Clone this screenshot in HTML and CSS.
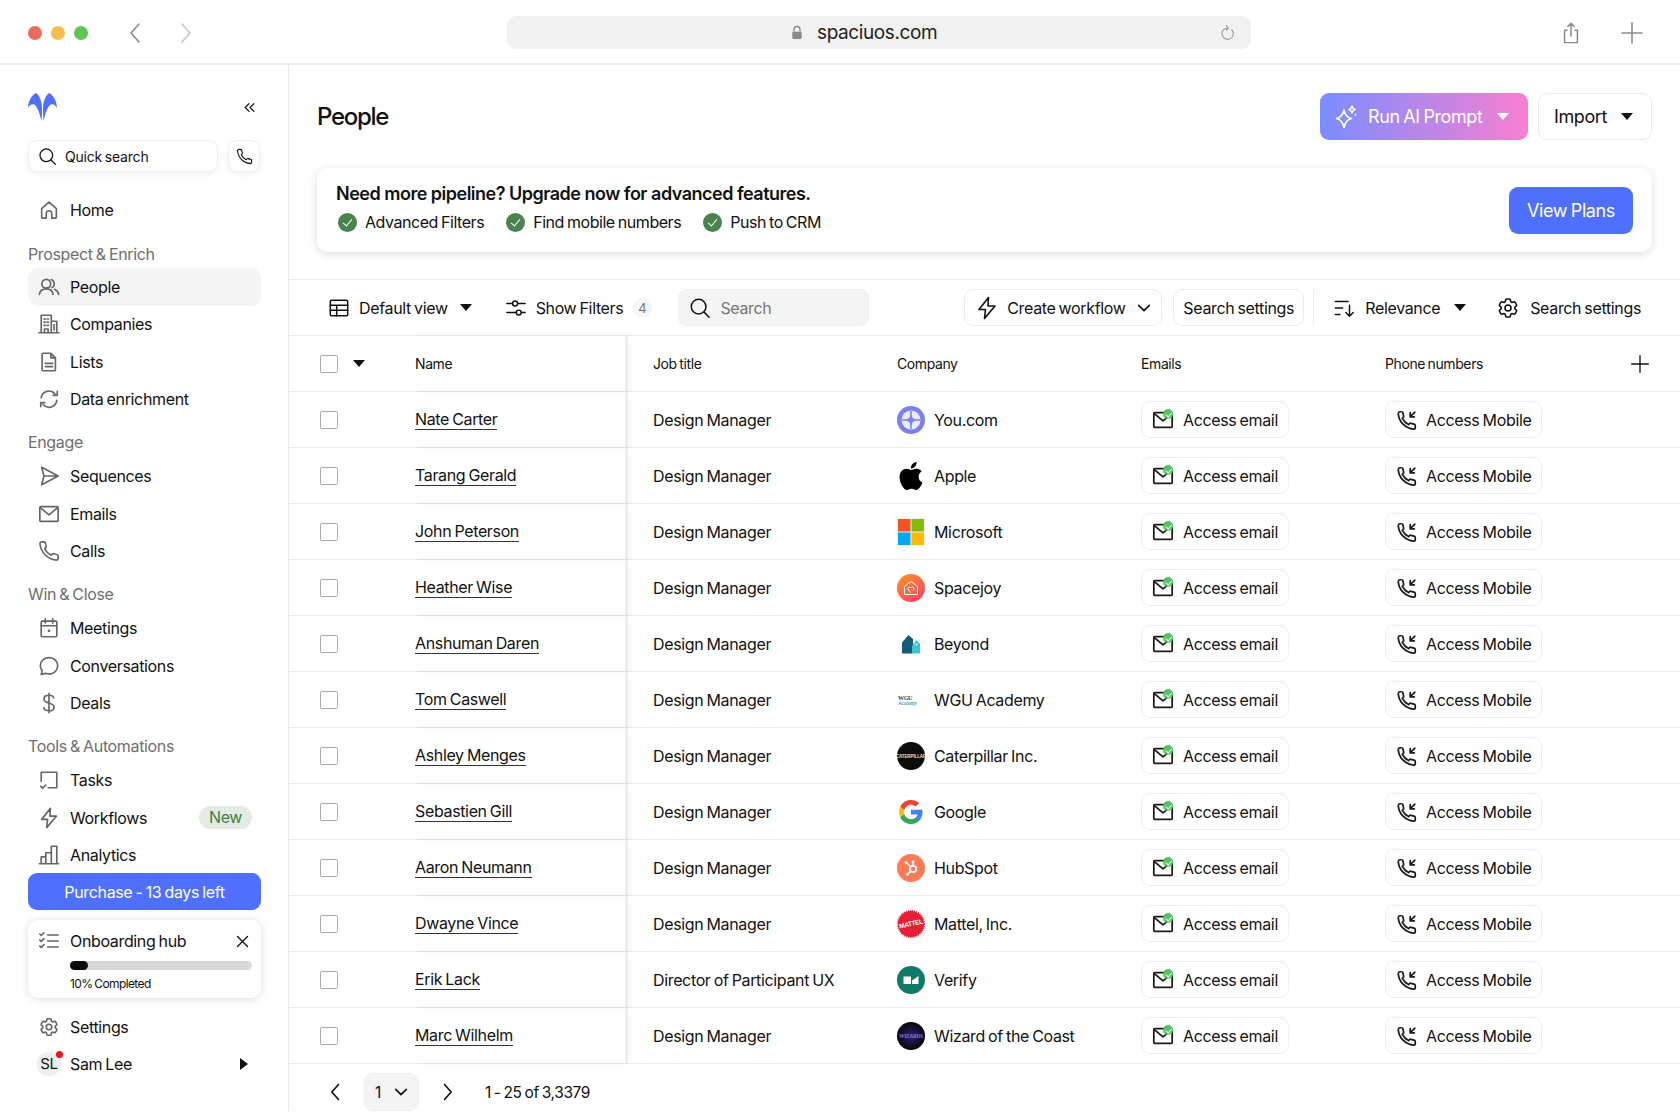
FILE: index.html
```html
<!DOCTYPE html>
<html lang="en">

<head>
    <meta charset="UTF-8">
    <meta name="viewport" content="width=device-width, initial-scale=1.0">
    <title>People</title>
    <link rel="stylesheet" href="styles.css">
</head>

<body>
    <svg class="sprite" xmlns="http://www.w3.org/2000/svg">
        <symbol id="i-home" viewBox="0 0 24 24"><path d="M4 10.5 12 3.5l8 7V20a.8.8 0 0 1-.8.8H15v-5a3 3 0 0 0-6 0v5H4.8A.8.8 0 0 1 4 20z"/></symbol>
        <symbol id="i-people" viewBox="0 0 24 24"><circle cx="9" cy="8.5" r="4.8"/><path d="M1.5 20c.6-3.6 3.6-6 7.5-6s6.9 2.4 7.5 6M14.5 3.9a4.8 4.8 0 0 1 .5 8.8M18 14.5c2.4 1 4 2.9 4.5 5.5"/></symbol>
        <symbol id="i-company" viewBox="0 0 24 24"><path d="M1 21.5h22M3.5 21.5V2.5h11v19M14.5 9h6v12.5M6.5 6.5h1.5M10 6.5h1.5M6.5 10h1.5M10 10h1.5M6.5 13.5h1.5M10 13.5h1.5M7 21.5v-4h4v4M17.5 12.5v6"/></symbol>
        <symbol id="i-file" viewBox="0 0 24 24"><path d="M5.5 2.5H14l5 5V20.5a1 1 0 0 1-1 1H5.5a1 1 0 0 1-1-1v-17a1 1 0 0 1 1-1zM14 2.5v5h5M8 13.5h8M8 17h8"/></symbol>
        <symbol id="i-sync" viewBox="0 0 24 24"><path d="M3.5 10.5a8.5 8.5 0 0 1 15-4M21 3.5V8h-4.5M20.5 13.5a8.5 8.5 0 0 1-15 4.5M3 20.5V16h4.5"/></symbol>
        <symbol id="i-send" viewBox="0 0 24 24"><path d="M4 2.5 22 12 4 21.5l2.5-9.5zM6.5 12H22"/></symbol>
        <symbol id="i-mail" viewBox="0 0 24 24"><rect x="2" y="4" width="20" height="16" rx="1"/><path d="m2.5 5 9.5 8 9.5-8"/></symbol>
        <symbol id="i-phone" viewBox="0 0 24 24"><path d="M22 17v3a2 2 0 0 1-2.2 2A19.8 19.8 0 0 1 11.2 19a19.5 19.5 0 0 1-6-6A19.8 19.8 0 0 1 2.1 4.2 2 2 0 0 1 4.1 2h2.5a1.5 1.5 0 0 1 1.5 1.3c.1.9.4 2.2.8 3.2a1.8 1.8 0 0 1-.4 1.9L7.3 9.6a16 16 0 0 0 7 7l1.2-1.2a1.8 1.8 0 0 1 1.9-.4c1 .4 2.3.7 3.2.8A1.5 1.5 0 0 1 22 17z"/></symbol>
        <symbol id="i-phone-in" viewBox="0 0 24 24"><path d="M21 20.5c0 .9-.8 1.700-1.700 1.500C10 21 3.400 14 2.500 5.500 2.400 4.600 3.100 3 4 3h2c.7 0 1.300.5 1.500 1.200.2 1 .4 2.400.8 3.300.2.500.1 1.100-.3 1.500L6.900 10.200c1.400 2.900 3.900 5.300 6.800 6.800l1.100-1.100c.4-.4 1-.5 1.500-.3.900.3 2.300.6 3.300.8.700.2 1.400.8 1.400 1.500z"/><path d="M20.5 3.500 15.500 8.500M15.500 4v4.500H20"/></symbol>
        <symbol id="i-calendar" viewBox="0 0 24 24"><rect x="3.5" y="4.5" width="17" height="17" rx="1"/><path d="M3.5 9.5h17M8 2v4.5M16 2v4.5"/><circle cx="12" cy="15" r=".6"/></symbol>
        <symbol id="i-chat" viewBox="0 0 24 24"><path d="M12 2.8c5.3 0 9.5 4 9.5 9s-4.2 9-9.5 9c-1.3 0-2.6-.3-3.8-.8l-4.7 1.2 1.1-4.1a8.8 8.8 0 0 1-2.1-5.3c0-5 4.2-9 9.5-9z"/></symbol>
        <symbol id="i-dollar" viewBox="0 0 24 24"><path d="M12 1.5v21M17 6.500C17 4.500 15 3.500 12 3.500s-5.500 1.400-5.500 4S9 11 12 12s5.500 2 5.500 4.500S15 20.500 12 20.500s-5.500-1.200-5.500-3.500"/></symbol>
        <symbol id="i-task" viewBox="0 0 24 24"><path d="M3.5 13.5v-10h17v17H11M3 19l2 2 3.5-3.5"/></symbol>
        <symbol id="i-bolt" viewBox="0 0 24 24"><path d="M13.5 1.5 4 13.5h6.5L9.5 22.5 20 10h-7z"/></symbol>
        <symbol id="i-bars" viewBox="0 0 24 24"><path d="M1.5 21.5h21M3.5 21.5V14h5v7.5M8.5 21.5V9.5h6v12M14.5 21.5V2.5h6v19"/></symbol>
        <symbol id="i-checklist" viewBox="0 0 24 24"><path d="M10.5 5.5H22M10.5 12H22M10.5 18.5H22M2 4.500l1.500 1.500L6.500 3M2 11l1.500 1.500 3-3M2 17.500 3.500 19l3-3"/></symbol>
        <symbol id="i-gear" viewBox="0 0 24 24"><path d="M9.594 3.940c.09-.542.56-.94 1.110-.94h2.593c.55 0 1.020.398 1.110.94l.213 1.281c.063.374.313.686.645.87.074.04.147.083.22.127.324.196.72.257 1.075.124l1.217-.456a1.125 1.125 0 0 1 1.370.49l1.296 2.247a1.125 1.125 0 0 1-.26 1.431l-1.003.827c-.293.24-.438.613-.431.992a6.759 6.759 0 0 1 0 .255c-.007.378.138.75.43.99l1.005.828c.424.35.534.954.26 1.430l-1.298 2.247a1.125 1.125 0 0 1-1.369.491l-1.217-.456c-.355-.133-.75-.072-1.076.124a6.570 6.570 0 0 1-.22.128c-.331.183-.581.495-.644.869l-.213 1.280c-.09.543-.56.941-1.110.941h-2.594c-.55 0-1.020-.398-1.110-.94l-.213-1.281c-.062-.374-.312-.686-.644-.87a6.520 6.520 0 0 1-.22-.127c-.325-.196-.72-.257-1.076-.124l-1.217.456a1.125 1.125 0 0 1-1.369-.49l-1.297-2.247a1.125 1.125 0 0 1 .26-1.431l1.004-.827c.292-.24.437-.613.43-.992a6.932 6.932 0 0 1 0-.255c.007-.378-.138-.75-.43-.99l-1.004-.828a1.125 1.125 0 0 1-.26-1.430l1.297-2.247a1.125 1.125 0 0 1 1.370-.491l1.216.456c.356.133.751.072 1.076-.124.072-.044.146-.087.22-.128.332-.183.582-.495.644-.869l.214-1.281z"/><circle cx="12" cy="12" r="3"/></symbol>
        <symbol id="i-search" viewBox="0 0 24 24"><circle cx="10.5" cy="10.5" r="8"/><path d="m16.5 16.5 5.5 5.5"/></symbol>
        <symbol id="i-table" viewBox="0 0 24 24"><rect x="2.5" y="3.5" width="19" height="17" rx="1.5"/><path d="M2.5 9h19M2.5 14.5h19M9.5 9v11.5"/></symbol>
        <symbol id="i-sliders" viewBox="0 0 24 24"><path d="M2 7h6M14 7h8M2 17h10M18 17h4"/><circle cx="11" cy="7" r="2.7"/><circle cx="15" cy="17" r="2.7"/></symbol>
        <symbol id="i-sort" viewBox="0 0 24 24"><path d="M2.5 5h14M2.5 12h8M2.5 19h5M18 9v12M14 17l4 4 4-4"/></symbol>
        <symbol id="i-spark" viewBox="0 0 24 24"><path d="M10 5c1 5 3 7.5 7.5 8.5C13 14.5 11 17 10 22.5 9 17 7 14.5 2.5 13.5 7 12.5 9 10 10 5z"/><path d="M18 1c.4 2 1.2 3 3 3.5-1.8.5-2.6 1.5-3 3.5-.4-2-1.2-3-3-3.5 1.8-.5 2.6-1.5 3-3.5zM21.5 9.5v.5"/></symbol>
        <symbol id="i-lock" viewBox="0 0 14 16"><path d="M3.5 7V4.5a3.5 3.5 0 0 1 7 0V7" fill="none" stroke-width="1.5"/><rect x="1.5" y="7" width="11" height="8.5" rx="1.5" fill="currentColor" stroke="none"/></symbol>
        <symbol id="i-reload" viewBox="0 0 24 24"><path d="M17.5 7a8.5 8.5 0 1 1-5.5-2.5M9.5 1l3 3.5-3 3"/></symbol>
        <symbol id="i-share" viewBox="0 0 24 24"><path d="M7.5 9H5v13.5h14V9h-2.5M12 15.5V1.5M8.5 5 12 1.5 15.5 5"/></symbol>
        <symbol id="i-plus" viewBox="0 0 24 24"><path d="M12 2v20M2 12h20"/></symbol>
        <symbol id="i-close" viewBox="0 0 24 24"><path d="m4 4 16 16M20 4 4 20"/></symbol>
        <symbol id="i-left" viewBox="0 0 24 24"><path d="m15 3-8 9 8 9"/></symbol>
        <symbol id="i-right" viewBox="0 0 24 24"><path d="m9 3 8 9-8 9"/></symbol>
        <symbol id="i-down" viewBox="0 0 24 24"><path d="m4 8 8 8 8-8"/></symbol>
        <symbol id="i-collapse" viewBox="0 0 24 24"><path d="M11 5 4 12l7 7M20 5l-7 7 7 7"/></symbol>
    </svg>

    <header class="browser-bar">
        <div class="lights">
            <span class="light red"></span>
            <span class="light yellow"></span>
            <span class="light green"></span>
        </div>
        <svg class="icon nav-back"><use href="#i-left"/></svg>
        <svg class="icon nav-forward"><use href="#i-right"/></svg>
        <div class="url-bar">
            <svg class="lock"><use href="#i-lock"/></svg>
            <span class="url-text">spaciuos.com</span>
            <svg class="icon reload"><use href="#i-reload"/></svg>
        </div>
        <svg class="icon share"><use href="#i-share"/></svg>
        <svg class="icon new-tab"><use href="#i-plus"/></svg>
    </header>

    <div class="app">
        <aside class="sidebar">
            <div class="side-top">
                <svg class="logo" viewBox="0 0 29 28">
                    <path d="M8 0C3 2.5.5 8 0 15c2-3.500 4.500-4.500 7-3 3 3 5 10 6.500 16 .4-4 .5-8 .5-12 0-7-2-13-6-16z"/>
                    <path d="M21 0c5 2.500 7.500 8 8 15-2-3.500-4.500-4.500-7-3-3 3-5 10-6.500 16-.4-4-.5-8-.5-12 0-7 2-13 6-16z"/>
                </svg>
                <svg class="icon collapse"><use href="#i-collapse"/></svg>
            </div>
            <div class="quick-row">
                <div class="quick-search">
                    <svg class="icon"><use href="#i-search"/></svg>
                    <span>Quick search</span>
                </div>
                <div class="quick-phone"><svg class="icon"><use href="#i-phone"/></svg></div>
            </div>

            <nav class="side-nav home-nav">
                <a class="nav-item"><svg class="icon"><use href="#i-home"/></svg>Home</a>
            </nav>

            <div class="side-label">Prospect &amp; Enrich</div>
            <nav class="side-nav">
                <a class="nav-item active"><svg class="icon"><use href="#i-people"/></svg>People</a>
                <a class="nav-item"><svg class="icon"><use href="#i-company"/></svg>Companies</a>
                <a class="nav-item"><svg class="icon"><use href="#i-file"/></svg>Lists</a>
                <a class="nav-item"><svg class="icon"><use href="#i-sync"/></svg>Data enrichment</a>
            </nav>

            <div class="side-label">Engage</div>
            <nav class="side-nav">
                <a class="nav-item"><svg class="icon"><use href="#i-send"/></svg>Sequences</a>
                <a class="nav-item"><svg class="icon"><use href="#i-mail"/></svg>Emails</a>
                <a class="nav-item"><svg class="icon"><use href="#i-phone"/></svg>Calls</a>
            </nav>

            <div class="side-label">Win &amp; Close</div>
            <nav class="side-nav">
                <a class="nav-item"><svg class="icon"><use href="#i-calendar"/></svg>Meetings</a>
                <a class="nav-item"><svg class="icon"><use href="#i-chat"/></svg>Conversations</a>
                <a class="nav-item"><svg class="icon"><use href="#i-dollar"/></svg>Deals</a>
            </nav>

            <div class="side-label">Tools &amp; Automations</div>
            <nav class="side-nav">
                <a class="nav-item"><svg class="icon"><use href="#i-task"/></svg>Tasks</a>
                <a class="nav-item"><svg class="icon"><use href="#i-bolt"/></svg>Workflows<span class="new-badge">New</span></a>
                <a class="nav-item"><svg class="icon"><use href="#i-bars"/></svg>Analytics</a>
            </nav>

            <button class="purchase">Purchase - 13 days left</button>

            <div class="onboarding">
                <div class="onboarding-head">
                    <svg class="icon"><use href="#i-checklist"/></svg>
                    <span>Onboarding hub</span>
                    <svg class="icon close"><use href="#i-close"/></svg>
                </div>
                <div class="progress"><div class="progress-fill"></div></div>
                <div class="progress-text">10% Completed</div>
            </div>

            <nav class="side-nav side-bottom">
                <a class="nav-item"><svg class="icon"><use href="#i-gear"/></svg>Settings</a>
                <a class="nav-item"><span class="avatar">SL</span>Sam Lee<span class="caret-right"></span></a>
            </nav>
        </aside>

        <main class="main">
            <div class="page-head">
                <h1>People</h1>
                <button class="ai-btn"><svg class="icon"><use href="#i-spark"/></svg>Run AI Prompt<span class="caret white"></span></button>
                <button class="import-btn">Import<span class="caret"></span></button>
            </div>

            <section class="banner">
                <div class="banner-text">
                    <div class="banner-title">Need more pipeline? Upgrade now for advanced features.</div>
                    <div class="banner-list">
                        <span class="banner-item"><span class="check"></span>Advanced Filters</span>
                        <span class="banner-item"><span class="check"></span>Find mobile numbers</span>
                        <span class="banner-item"><span class="check"></span>Push to CRM</span>
                    </div>
                </div>
                <button class="view-plans">View Plans</button>
            </section>

            <div class="toolbar">
                <div class="tool"><svg class="icon"><use href="#i-table"/></svg>Default view<span class="caret"></span></div>
                <div class="tool filters"><svg class="icon"><use href="#i-sliders"/></svg>Show Filters<span class="count">4</span></div>
                <div class="search-box"><svg class="icon"><use href="#i-search"/></svg>Search</div>
                <div class="tool-right">
                    <div class="tool-btn workflow"><svg class="icon"><use href="#i-bolt"/></svg>Create workflow<svg class="icon chevron"><use href="#i-down"/></svg></div>
                    <div class="tool-btn settings-btn">Search settings</div>
                    <div class="tool-divider"></div>
                    <div class="tool relevance"><svg class="icon"><use href="#i-sort"/></svg>Relevance<span class="caret"></span></div>
                    <div class="tool gear-tool"><svg class="icon"><use href="#i-gear"/></svg>Search settings</div>
                </div>
            </div>

            <div class="table">
                <div class="row head">
                    <div class="cell-check"><span class="box"></span><span class="caret"></span></div>
                    <div class="cell-name">Name</div>
                    <div class="cell">Job title</div>
                    <div class="cell">Company</div>
                    <div class="cell">Emails</div>
                    <div class="cell phone-head">Phone numbers<svg class="icon add-col"><use href="#i-plus"/></svg></div>
                </div>

                <div class="row">
                    <div class="cell-check"><span class="box"></span></div>
                    <div class="cell-name"><a>Nate Carter</a></div>
                    <div class="cell">Design Manager</div>
                    <div class="cell company">
                        <svg class="co-logo" viewBox="0 0 28 28"><circle cx="14" cy="14" r="14" fill="#7b80ee"/><circle cx="14" cy="14" r="9.5" fill="#e9eafd"/><path d="M14 5v18M5 14h18" stroke="#7b80ee" stroke-width="1.5"/><path d="M14 7.5c.6 4 2.5 5.9 6.5 6.5-4 .6-5.900 2.500-6.500 6.500-.6-4-2.500-5.900-6.500-6.500 4-.6 5.900-2.500 6.500-6.500z" fill="#7b80ee"/></svg>
                        You.com
                    </div>
                    <div class="cell"><div class="access"><span class="mail-wrap"><svg class="icon"><use href="#i-mail"/></svg><span class="mail-dot"></span></span>Access email</div></div>
                    <div class="cell"><div class="access phone"><svg class="icon"><use href="#i-phone-in"/></svg>Access Mobile</div></div>
                </div>

                <div class="row">
                    <div class="cell-check"><span class="box"></span></div>
                    <div class="cell-name"><a>Tarang Gerald</a></div>
                    <div class="cell">Design Manager</div>
                    <div class="cell company">
                        <svg class="co-logo" viewBox="0 0 24 24"><path fill="#000" d="M12.152 6.896c-.948 0-2.415-1.078-3.960-1.040-2.040.027-3.910 1.183-4.961 3.014-2.117 3.675-.546 9.103 1.519 12.090 1.013 1.454 2.208 3.090 3.792 3.039 1.520-.065 2.090-.987 3.935-.987 1.831 0 2.350.987 3.960.948 1.637-.026 2.676-1.480 3.676-2.948 1.156-1.688 1.636-3.325 1.662-3.415-.039-.013-3.182-1.221-3.220-4.857-.026-3.040 2.480-4.494 2.597-4.559-1.429-2.090-3.623-2.324-4.390-2.376-2-.156-3.675 1.090-4.610 1.090zM15.530 3.830c.843-1.012 1.400-2.427 1.245-3.830-1.207.052-2.662.805-3.532 1.818-.780.896-1.454 2.338-1.273 3.714 1.338.104 2.715-.688 3.559-1.701"/></svg>
                        Apple
                    </div>
                    <div class="cell"><div class="access"><span class="mail-wrap"><svg class="icon"><use href="#i-mail"/></svg><span class="mail-dot"></span></span>Access email</div></div>
                    <div class="cell"><div class="access phone"><svg class="icon"><use href="#i-phone-in"/></svg>Access Mobile</div></div>
                </div>

                <div class="row">
                    <div class="cell-check"><span class="box"></span></div>
                    <div class="cell-name"><a>John Peterson</a></div>
                    <div class="cell">Design Manager</div>
                    <div class="cell company">
                        <svg class="co-logo" viewBox="0 0 28 28"><rect width="28" height="28" fill="#f0f0ee"/><rect x="1" y="1" width="12.5" height="12.5" fill="#f35325"/><rect x="14.5" y="1" width="12.5" height="12.5" fill="#81bc06"/><rect x="1" y="14.5" width="12.5" height="12.5" fill="#05a6f0"/><rect x="14.5" y="14.5" width="12.5" height="12.5" fill="#ffba08"/></svg>
                        Microsoft
                    </div>
                    <div class="cell"><div class="access"><span class="mail-wrap"><svg class="icon"><use href="#i-mail"/></svg><span class="mail-dot"></span></span>Access email</div></div>
                    <div class="cell"><div class="access phone"><svg class="icon"><use href="#i-phone-in"/></svg>Access Mobile</div></div>
                </div>

                <div class="row">
                    <div class="cell-check"><span class="box"></span></div>
                    <div class="cell-name"><a>Heather Wise</a></div>
                    <div class="cell">Design Manager</div>
                    <div class="cell company">
                        <svg class="co-logo" viewBox="0 0 28 28"><defs><linearGradient id="joy" x1="0.15" y1="0" x2="0.85" y2="1"><stop offset="0" stop-color="#fb9327"/><stop offset="1" stop-color="#f5406a"/></linearGradient></defs><circle cx="14" cy="14" r="14" fill="url(#joy)"/><path d="M7.5 12.5 14 7.5l6.5 5v8h-13z" fill="none" stroke="#fff" stroke-width="1"/><path d="M14 18.5c-2.5-1.800-3.200-3-3-4.200.3-1.400 2.200-1.500 3-.3.800-1.200 2.700-1.100 3 .3.100.8-.2 1.500-1 2.200" fill="none" stroke="#fff" stroke-width="1"/></svg>
                        Spacejoy
                    </div>
                    <div class="cell"><div class="access"><span class="mail-wrap"><svg class="icon"><use href="#i-mail"/></svg><span class="mail-dot"></span></span>Access email</div></div>
                    <div class="cell"><div class="access phone"><svg class="icon"><use href="#i-phone-in"/></svg>Access Mobile</div></div>
                </div>

                <div class="row">
                    <div class="cell-check"><span class="box"></span></div>
                    <div class="cell-name"><a>Anshuman Daren</a></div>
                    <div class="cell">Design Manager</div>
                    <div class="cell company">
                        <svg class="co-logo" viewBox="0 0 28 28"><path d="M5 12.5 11.5 5 16 9v14.5H5z" fill="#145b73"/><path d="M16.5 14l3-4 3.500 4v9.500h-8V16z" fill="#3cc4d1"/><circle cx="19.5" cy="14.5" r="1" fill="#fff"/></svg>
                        Beyond
                    </div>
                    <div class="cell"><div class="access"><span class="mail-wrap"><svg class="icon"><use href="#i-mail"/></svg><span class="mail-dot"></span></span>Access email</div></div>
                    <div class="cell"><div class="access phone"><svg class="icon"><use href="#i-phone-in"/></svg>Access Mobile</div></div>
                </div>

                <div class="row">
                    <div class="cell-check"><span class="box"></span></div>
                    <div class="cell-name"><a>Tom Caswell</a></div>
                    <div class="cell">Design Manager</div>
                    <div class="cell company">
                        <svg class="co-logo" viewBox="0 0 28 28"><text x="1" y="14" class="wgu-top">WGU</text><text x="1" y="19" class="wgu-bottom">Academy</text></svg>
                        WGU Academy
                    </div>
                    <div class="cell"><div class="access"><span class="mail-wrap"><svg class="icon"><use href="#i-mail"/></svg><span class="mail-dot"></span></span>Access email</div></div>
                    <div class="cell"><div class="access phone"><svg class="icon"><use href="#i-phone-in"/></svg>Access Mobile</div></div>
                </div>

                <div class="row">
                    <div class="cell-check"><span class="box"></span></div>
                    <div class="cell-name"><a>Ashley Menges</a></div>
                    <div class="cell">Design Manager</div>
                    <div class="cell company">
                        <svg class="co-logo" viewBox="0 0 28 28"><circle cx="14" cy="14" r="14" fill="#0c0c0c"/><text x="14" y="15.5" class="cat-text">CATERPILLAR</text></svg>
                        Caterpillar Inc.
                    </div>
                    <div class="cell"><div class="access"><span class="mail-wrap"><svg class="icon"><use href="#i-mail"/></svg><span class="mail-dot"></span></span>Access email</div></div>
                    <div class="cell"><div class="access phone"><svg class="icon"><use href="#i-phone-in"/></svg>Access Mobile</div></div>
                </div>

                <div class="row">
                    <div class="cell-check"><span class="box"></span></div>
                    <div class="cell-name"><a>Sebastien Gill</a></div>
                    <div class="cell">Design Manager</div>
                    <div class="cell company">
                        <svg class="co-logo" viewBox="-0.85 -0.85 25.7 25.7"><path fill="#4285f4" d="M22.56 12.25c0-.78-.07-1.53-.2-2.25H12v4.26h5.92c-.26 1.37-1.04 2.53-2.21 3.31v2.77h3.57c2.08-1.92 3.28-4.74 3.28-8.09z"/><path fill="#34a853" d="M12 23c2.97 0 5.46-.98 7.28-2.66l-3.57-2.77c-.98.66-2.23 1.06-3.71 1.06-2.86 0-5.29-1.93-6.16-4.53H2.18v2.84C3.99 20.53 7.7 23 12 23z"/><path fill="#fbbc05" d="M5.84 14.09c-.22-.66-.35-1.36-.35-2.09s.13-1.43.35-2.09V7.07H2.18C1.43 8.55 1 10.22 1 12s.43 3.45 1.18 4.93l2.85-2.22.81-.62z"/><path fill="#ea4335" d="M12 5.38c1.62 0 3.06.56 4.21 1.64l3.15-3.15C17.45 2.09 14.97 1 12 1 7.7 1 3.99 3.47 2.18 7.07l3.66 2.84c.87-2.6 3.3-4.53 6.16-4.53z"/></svg>
                        Google
                    </div>
                    <div class="cell"><div class="access"><span class="mail-wrap"><svg class="icon"><use href="#i-mail"/></svg><span class="mail-dot"></span></span>Access email</div></div>
                    <div class="cell"><div class="access phone"><svg class="icon"><use href="#i-phone-in"/></svg>Access Mobile</div></div>
                </div>

                <div class="row">
                    <div class="cell-check"><span class="box"></span></div>
                    <div class="cell-name"><a>Aaron Neumann</a></div>
                    <div class="cell">Design Manager</div>
                    <div class="cell company">
                        <svg class="co-logo" viewBox="0 0 28 28"><circle cx="14" cy="14" r="14" fill="#ff7a59"/><circle cx="16" cy="15" r="3.2" fill="none" stroke="#fff" stroke-width="1.8"/><path d="M16 11.5V8M13.7 12.5 9.5 9M13.5 17.5 11 20" stroke="#fff" stroke-width="1.5"/><circle cx="16" cy="7.8" r="1.4" fill="#fff"/><circle cx="9" cy="8.5" r="1.3" fill="#fff"/><circle cx="10.5" cy="20.5" r="1.4" fill="#fff"/></svg>
                        HubSpot
                    </div>
                    <div class="cell"><div class="access"><span class="mail-wrap"><svg class="icon"><use href="#i-mail"/></svg><span class="mail-dot"></span></span>Access email</div></div>
                    <div class="cell"><div class="access phone"><svg class="icon"><use href="#i-phone-in"/></svg>Access Mobile</div></div>
                </div>

                <div class="row">
                    <div class="cell-check"><span class="box"></span></div>
                    <div class="cell-name"><a>Dwayne Vince</a></div>
                    <div class="cell">Design Manager</div>
                    <div class="cell company">
                        <svg class="co-logo" viewBox="0 0 28 28"><circle cx="14" cy="14" r="13" fill="#e61e34" stroke="#e61e34" stroke-width="2" stroke-dasharray="1 1"/><text x="14" y="16" class="mattel-text" transform="rotate(-12 14 14)">MATTEL</text></svg>
                        Mattel, Inc.
                    </div>
                    <div class="cell"><div class="access"><span class="mail-wrap"><svg class="icon"><use href="#i-mail"/></svg><span class="mail-dot"></span></span>Access email</div></div>
                    <div class="cell"><div class="access phone"><svg class="icon"><use href="#i-phone-in"/></svg>Access Mobile</div></div>
                </div>

                <div class="row">
                    <div class="cell-check"><span class="box"></span></div>
                    <div class="cell-name"><a>Erik Lack</a></div>
                    <div class="cell">Director of Participant UX</div>
                    <div class="cell company">
                        <svg class="co-logo" viewBox="0 0 28 28"><circle cx="14" cy="14" r="14" fill="#0f7a66"/><path d="M6.5 10.5H14V18H6.5zM15 18V14.500l6.500-4.500v8z" fill="#fff"/></svg>
                        Verify
                    </div>
                    <div class="cell"><div class="access"><span class="mail-wrap"><svg class="icon"><use href="#i-mail"/></svg><span class="mail-dot"></span></span>Access email</div></div>
                    <div class="cell"><div class="access phone"><svg class="icon"><use href="#i-phone-in"/></svg>Access Mobile</div></div>
                </div>

                <div class="row">
                    <div class="cell-check"><span class="box"></span></div>
                    <div class="cell-name"><a>Marc Wilhelm</a></div>
                    <div class="cell">Design Manager</div>
                    <div class="cell company">
                        <svg class="co-logo" viewBox="0 0 28 28"><defs><radialGradient id="wiz"><stop offset="0" stop-color="#2b2266"/><stop offset="1" stop-color="#08060f"/></radialGradient></defs><circle cx="14" cy="14" r="14" fill="url(#wiz)"/><text x="14" y="16" class="wiz-text">WIZARDS</text></svg>
                        Wizard of the Coast
                    </div>
                    <div class="cell"><div class="access"><span class="mail-wrap"><svg class="icon"><use href="#i-mail"/></svg><span class="mail-dot"></span></span>Access email</div></div>
                    <div class="cell"><div class="access phone"><svg class="icon"><use href="#i-phone-in"/></svg>Access Mobile</div></div>
                </div>
            </div>

            <div class="pager">
                <svg class="icon"><use href="#i-left"/></svg>
                <div class="page-select">1<svg class="icon"><use href="#i-down"/></svg></div>
                <svg class="icon"><use href="#i-right"/></svg>
                <span class="page-info">1 - 25 of 3,3379</span>
            </div>
        </main>
    </div>
</body>

</html>
```
FILE: styles.css
```css
* {
    padding: 0;
    margin: 0;
    box-sizing: border-box;
}

html,
body {
    height: 100%;
    overflow: hidden;
}

body {
    background: #fff;
    color: #111;
    font-family: Inter, "Liberation Sans", sans-serif;
    font-size: 16px;
    letter-spacing: -0.35px;
    word-spacing: -1px;
}

button {
    font-family: inherit;
    letter-spacing: inherit;
    word-spacing: inherit;
    border: 0;
}

.sprite {
    display: none;
}

.icon {
    width: 22px;
    height: 22px;
    fill: none;
    stroke: currentColor;
    stroke-width: 1.6;
    stroke-linecap: round;
    stroke-linejoin: round;
    flex: none;
}

/* browser chrome */
.browser-bar {
    height: 65px;
    border-bottom: 2px solid #eee;
    display: flex;
    align-items: center;
    padding: 2px 36px 0 28px;
    color: #8a8a8a;
}

.lights {
    display: flex;
    gap: 9px;
}

.light {
    width: 14px;
    height: 14px;
    border-radius: 50%;
}

.red { background: #ee6a5f; }
.yellow { background: #f5bd4f; }
.green { background: #61c454; }

.nav-back {
    width: 24px;
    height: 28px;
    margin-left: 36px;
}

.nav-forward {
    width: 24px;
    height: 28px;
    margin-left: 25px;
    color: #c4c4c4;
}

.url-bar {
    width: 745px;
    height: 33px;
    margin-left: 310px;
    background: #f1f1f1;
    border-radius: 9px;
    display: flex;
    align-items: center;
    position: relative;
    padding-left: 284px;
    color: #222;
}

.lock {
    width: 12px;
    height: 15px;
    color: #8a8a8a;
    stroke: currentColor;
    margin-right: 14px;
}

.url-text {
    font-size: 19px;
    letter-spacing: -0.4px;
}

.reload {
    position: absolute;
    right: 15px;
    width: 16px;
    height: 16px;
    color: #999;
}

.share {
    margin-left: 309px;
    width: 22px;
    height: 24px;
}

.new-tab {
    margin-left: 38px;
    width: 24px;
    height: 24px;
}

/* sidebar */
.app {
    display: flex;
    height: 1046px;
}

.sidebar {
    width: 289px;
    flex: none;
    border-right: 1px solid #eaeaea;
    padding-left: 28px;
    padding-right: 27px;
}

.side-top {
    height: 75px;
    display: flex;
    align-items: center;
    justify-content: space-between;
    padding-right: 5px;
    padding-top: 9px;
}

.logo {
    width: 29px;
    height: 28px;
    fill: #4f6fff;
}

.collapse {
    width: 13px;
    height: 13px;
    stroke-width: 2.4;
    color: #222;
}

.quick-row {
    display: flex;
    gap: 10px;
    height: 32px;
}

.quick-search,
.quick-phone {
    background: #fff;
    border: 1px solid #efefef;
    border-radius: 9px;
    box-shadow: 0 2px 6px rgba(0, 0, 0, .06);
    display: flex;
    align-items: center;
}

.quick-search {
    width: 190px;
    padding-left: 9px;
    gap: 8px;
    font-size: 14px;
    letter-spacing: -0.2px;
}

.quick-search .icon {
    width: 19px;
    height: 19px;
}

.quick-phone {
    width: 32px;
    justify-content: center;
}

.quick-phone .icon {
    width: 17px;
    height: 17px;
}

.home-nav {
    margin-top: 19px;
}

.side-label {
    height: 20px;
    line-height: 20px;
    margin-top: 13.5px;
    margin-bottom: 6px;
    color: #6e6e6e;
}

.home-nav + .side-label {
    margin-top: 15px;
    margin-bottom: 4.5px;
}

.nav-item {
    height: 37.5px;
    display: flex;
    align-items: center;
    gap: 10px;
    padding-left: 10px;
    border-radius: 10px;
    color: #111;
}

.nav-item .icon {
    color: #666;
    stroke-width: 1.8;
}

.nav-item.active {
    background: #f4f4f4;
}

.new-badge {
    margin-left: auto;
    margin-right: 9px;
    width: 53px;
    height: 23px;
    line-height: 23px;
    text-align: center;
    border-radius: 12px;
    background: #e3ece4;
    color: #3f7d45;
}

.purchase {
    display: block;
    width: 100%;
    height: 37px;
    margin-top: -1px;
    background: #4f6fff;
    color: #fff;
    font-size: 16px;
    border-radius: 9px;
}

.onboarding {
    height: 78px;
    margin-top: 10px;
    padding: 10px 9px 0 10px;
    background: #fff;
    border-radius: 10px;
    box-shadow: 0 1px 8px rgba(0, 0, 0, .14);
}

.onboarding-head {
    display: flex;
    align-items: center;
    gap: 10px;
}

.onboarding-head .icon {
    stroke-width: 1.8;
}

.onboarding-head .icon:first-child {
    color: #666;
}

.onboarding-head .close {
    margin-left: auto;
    margin-right: 2px;
    width: 15px;
    height: 15px;
    stroke-width: 2.2;
    color: #111;
}

.progress {
    margin: 9px 0 0 32px;
    height: 9px;
    border-radius: 5px;
    background: #d8d8d8;
}

.progress-fill {
    width: 18px;
    height: 9px;
    border-radius: 5px;
    background: #0b0b0b;
}

.progress-text {
    margin: 4px 0 0 32px;
    font-size: 12px;
    letter-spacing: -0.6px;
    line-height: 20px;
}

.side-bottom {
    margin-top: 10px;
}

.avatar {
    width: 24px;
    height: 24px;
    margin-left: -1px;
    margin-right: -1px;
    border-radius: 50%;
    background: #eee;
    font-size: 15px;
    line-height: 24px;
    text-align: center;
    position: relative;
}

.avatar::after {
    content: '';
    position: absolute;
    top: -1px;
    right: -2px;
    width: 7px;
    height: 7px;
    border-radius: 50%;
    background: #f01414;
}

.caret-right {
    margin-left: auto;
    margin-right: 13px;
    border-left: 8px solid #111;
    border-top: 6.5px solid transparent;
    border-bottom: 6.5px solid transparent;
}

/* main column */
.main {
    flex: 1;
    min-width: 0;
}

.page-head {
    display: flex;
    align-items: center;
    height: 47px;
    margin: 28px 28px 0 28px;
}

h1 {
    font-size: 24px;
    font-weight: 500;
    letter-spacing: -1.3px;
    margin-right: auto;
}

.caret {
    width: 0;
    height: 0;
    border-top: 7px solid #111;
    border-left: 6.5px solid transparent;
    border-right: 6.5px solid transparent;
}

.caret.white {
    border-top-color: #fff;
}

.ai-btn,
.import-btn {
    height: 47px;
    display: flex;
    align-items: center;
    border-radius: 9px;
    font-size: 18px;
    letter-spacing: -0.4px;
}

.ai-btn {
    width: 208px;
    padding-left: 14px;
    gap: 10px;
    color: #fff;
    background: linear-gradient(90deg, #7a8dff, #f87fd1);
}

.ai-btn .icon {
    width: 24px;
    height: 24px;
}

.ai-btn .caret {
    margin-left: 4px;
}

.import-btn {
    width: 114px;
    margin-left: 10px;
    padding-left: 15px;
    gap: 14px;
    color: #111;
    background: #fff;
    border: 1px solid #ececec;
}

.banner {
    margin: 28px 28px 27px 28px;
    height: 84px;
    padding: 0 19px 0 19px;
    display: flex;
    align-items: center;
    justify-content: space-between;
    background: #fff;
    border-radius: 10px;
    box-shadow: 0 2px 8px rgba(0, 0, 0, .14);
}

.banner-text {
    margin-bottom: 4px;
}

.banner-title {
    font-size: 18px;
    font-weight: 600;
    letter-spacing: -0.5px;
    word-spacing: 0;
    line-height: 24px;
}

.banner-list {
    display: flex;
    gap: 20px;
    margin-top: 4px;
    line-height: 24px;
    letter-spacing: -0.45px;
}

.banner-item {
    display: flex;
    align-items: center;
    gap: 8px;
}

.check {
    width: 19px;
    height: 19px;
    margin-left: 2px;
    border-radius: 50%;
    background: #4a8250;
    position: relative;
}

.check::after {
    content: '';
    position: absolute;
    left: 7px;
    top: 4.5px;
    width: 4px;
    height: 8px;
    border-right: 1.5px solid #fff;
    border-bottom: 1.5px solid #fff;
    transform: rotate(40deg);
}

.view-plans {
    width: 124px;
    height: 47px;
    background: #4f6fff;
    color: #fff;
    font-size: 18px;
    letter-spacing: -0.4px;
    border-radius: 9px;
}

/* toolbar */
.toolbar {
    height: 57px;
    border-top: 1px solid #eaeaea;
    border-bottom: 1px solid #eaeaea;
    padding: 0 39px 0 39px;
    display: flex;
    align-items: center;
}

.tool {
    display: flex;
    align-items: center;
    gap: 9px;
}

.tool .caret {
    margin-left: 3px;
}

.filters {
    margin-left: 33px;
}

.count {
    width: 20px;
    height: 20px;
    font-size: 13px;
    line-height: 20px;
    text-align: center;
    color: #777;
    background: #f6f6f6;
    border-radius: 50%;
}

.search-box {
    width: 191px;
    height: 37px;
    margin-left: 26px;
    padding-left: 10px;
    display: flex;
    align-items: center;
    gap: 9px;
    color: #777;
    background: #f4f4f4;
    border: 1px solid #eee;
    border-radius: 9px;
}

.search-box .icon {
    color: #111;
}

.tool-right {
    margin-left: auto;
    display: flex;
    align-items: center;
}

.tool-btn {
    height: 37px;
    display: flex;
    align-items: center;
    border: 1px solid #ececec;
    border-radius: 9px;
}

.workflow {
    width: 198px;
    padding-left: 10px;
    gap: 8px;
}

.workflow .icon:first-child {
    width: 24px;
    height: 24px;
}

.chevron {
    width: 16px;
    height: 16px;
    margin-left: 3px;
    stroke-width: 2.4;
}

.settings-btn {
    width: 131px;
    margin-left: 11px;
    justify-content: center;
}

.tool-divider {
    width: 1px;
    height: 37px;
    margin: 0 19px 0 9px;
    background: #ececec;
}

.relevance {
    gap: 10px;
}

.relevance .caret {
    margin-left: 4px;
}

.gear-tool {
    margin-left: 30px;
    gap: 10px;
}

.gear-tool .icon {
    width: 24px;
    height: 24px;
}

/* table */
.row {
    display: grid;
    grid-template-columns: 126px 212px 270px 244px 244px 1fr;
    height: 56px;
    border-bottom: 1px solid #eaeaea;
    align-items: center;
}

.row > .cell:nth-child(3) {
    padding-left: 26px;
}

.cell {
    display: flex;
    align-items: center;
}

.cell-check {
    padding-left: 31px;
    display: flex;
    align-items: center;
    gap: 15px;
}

.box {
    width: 18px;
    height: 18px;
    border: 1.5px solid #aaa;
    border-radius: 2px;
}

.cell-name {
    height: 100%;
    display: flex;
    align-items: center;
    border-right: 2px solid #ececec;
    box-shadow: 3px 0 4px rgba(0, 0, 0, .05);
}

.cell-name a {
    color: #111;
    border-bottom: 1px solid #333;
    line-height: 19px;
}

.head {
    font-size: 14px;
    letter-spacing: -0.4px;
}

.phone-head {
    justify-content: space-between;
    padding-right: 30px;
}

.add-col {
    width: 20px;
    height: 20px;
}

.company {
    gap: 9px;
}

.co-logo {
    width: 28px;
    height: 28px;
    flex: none;
}

.wgu-top {
    font: 700 6px "Liberation Serif", serif;
    fill: #223f66;
}

.wgu-bottom {
    font: 5.5px "Liberation Serif", serif;
    fill: #2f7fc1;
}

.cat-text {
    font: 700 4.5px "Liberation Sans", sans-serif;
    fill: #f5e7b2;
    text-anchor: middle;
    letter-spacing: -0.1px;
}

.mattel-text {
    font: 700 6.5px "Liberation Sans", sans-serif;
    fill: #fff;
    text-anchor: middle;
}

.wiz-text {
    font: 700 5.5px "Liberation Serif", serif;
    fill: #7d78e8;
    text-anchor: middle;
}

.access {
    height: 37px;
    padding: 0 10px 0 10px;
    display: flex;
    align-items: center;
    gap: 9px;
    border: 1px solid #eee;
    border-radius: 9px;
}

.access.phone {
    gap: 8px;
}

.access .icon {
    stroke-width: 1.9;
    color: #1a1a1a;
}

.mail-wrap {
    position: relative;
    display: flex;
}

.mail-dot {
    position: absolute;
    top: 0;
    right: 1px;
    width: 10px;
    height: 10px;
    border-radius: 50%;
    background: #4fc65a;
}

.mail-dot::after {
    content: '';
    position: absolute;
    left: 3.5px;
    top: 2px;
    width: 2.5px;
    height: 4.5px;
    border-right: 1px solid #fff;
    border-bottom: 1px solid #fff;
    transform: rotate(40deg);
}

.pager {
    display: flex;
    align-items: center;
    height: 38px;
    margin-top: 9px;
    padding-left: 37px;
    font-size: 15.5px;
    letter-spacing: -0.4px;
}

.pager > .icon {
    width: 20px;
    height: 20px;
    stroke-width: 2;
}

.page-select {
    width: 55px;
    height: 38px;
    margin: 0 18px 0 18px;
    padding-left: 10px;
    display: flex;
    align-items: center;
    gap: 12px;
    background: #f4f4f4;
    border: 1px solid #eee;
    border-radius: 9px;
}

.page-select .icon {
    width: 16px;
    height: 16px;
    stroke-width: 2.4;
}

.page-info {
    margin-left: 28px;
}
```
